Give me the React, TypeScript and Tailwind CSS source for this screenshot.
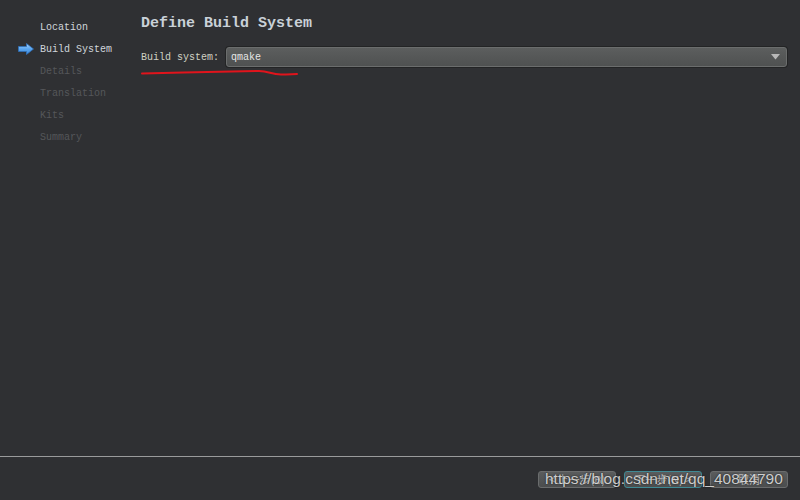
import React from "react";

const mono = { fontFamily: '"Liberation Mono", "DejaVu Sans Mono", monospace' };

function Arrow() {
  return (
    <svg width="16" height="12" viewBox="0 0 16 12">
      <defs>
        <linearGradient id="ag" x1="0" y1="0" x2="0" y2="1">
          <stop offset="0" stopColor="#a8d4ff" />
          <stop offset="0.5" stopColor="#5aa6f0" />
          <stop offset="1" stopColor="#3a86d8" />
        </linearGradient>
      </defs>
      <path d="M0.5 3.5 H8.5 V0.5 L15.5 6 L8.5 11.5 V8.5 H0.5 Z" fill="url(#ag)" stroke="#2f6fb8" strokeWidth="0.8" />
    </svg>
  );
}

export default function App() {
  const items = [
    { t: "Location", s: "done" },
    { t: "Build System", s: "active" },
    { t: "Details", s: "off" },
    { t: "Translation", s: "off" },
    { t: "Kits", s: "off" },
    { t: "Summary", s: "off" },
  ];
  return (
    <div className="relative w-[800px] h-[500px] bg-[#2f3033] flex flex-col overflow-hidden" style={mono}>
      <div className="flex flex-1">
        <div className="w-[141px] pt-[16px] flex flex-col">
          {items.map((it) => (
            <div key={it.t} className="h-[22px] flex items-center">
              <div className="w-[40px] pl-[18px] flex items-center">
                {it.s === "active" && <Arrow />}
              </div>
              <span
                className={
                  "text-[10px] leading-none pt-[1px] " +
                  (it.s === "off" ? "text-[#55575a]" : "text-[#cfd6dc]")
                }
              >
                {it.t}
              </span>
            </div>
          ))}
        </div>
        <div className="flex-1 pr-[13px] pt-[15px] relative">
          <div className="text-[15px] font-bold leading-[18px] text-[#c9d1d8] h-[18px]">Define Build System</div>
          <div className="flex items-center mt-[14px] h-[20px]">
            <span className="text-[10px] text-[#cfd2c4] w-[85px] pt-[1px]">Build system:</span>
            <div className="flex-1 h-[20px] rounded-[3px] border border-[#6b6d6d] bg-gradient-to-b from-[#5c5e5e] to-[#4f5151] shadow-[0_0_0_1px_#232425] flex items-center pl-[4px] pr-[6px]">
              <span className="text-[10px] text-[#e6e6e6] flex-1">qmake</span>
              <svg width="9" height="6" viewBox="0 0 9 6">
                <path d="M0 0 H9 L4.5 5.5 Z" fill="#b8b8b8" />
              </svg>
            </div>
          </div>
          <svg className="absolute left-0 top-[66px]" width="170" height="14" viewBox="0 0 170 14">
            <path d="M1 7.5 C40 6.5 90 5.5 118 5 C128 5 130 8.5 140 8.5 C148 8.5 152 8 156 8" stroke="#e0141c" strokeWidth="2" fill="none" strokeLinecap="round" />
          </svg>
        </div>
      </div>
      <div className="h-[44px] border-t border-[#9a9b9c] flex items-start justify-end pt-[14px] pr-[12px] gap-[8px]">
        {["< 上一步(B)", "下一步(N) >", "取消"].map((b, i) => (
          <div
            key={b}
            className={
              "w-[78px] h-[17px] rounded-[3px] flex items-center justify-center text-[11px] text-[#bbbbbb] bg-gradient-to-b from-[#5a5c5d] to-[#4b4d4e] border " +
              (i === 1 ? "border-[#3f8a95]" : "border-[#6a6c6d]")
            }
            style={{ fontFamily: '"Noto Sans CJK SC", "Liberation Sans", sans-serif' }}
          >
            {b}
          </div>
        ))}
      </div>
      <div
        className="absolute left-[545px] top-[470px] text-[15.5px] leading-[18px] text-[rgba(235,235,235,0.85)] whitespace-nowrap [text-shadow:0_0_2px_rgba(0,0,0,0.8)]"
        style={{ fontFamily: '"Liberation Sans", Arial, sans-serif' }}
      >
        https://blog.csdn.net/qq_40844790
      </div>
    </div>
  );
}
